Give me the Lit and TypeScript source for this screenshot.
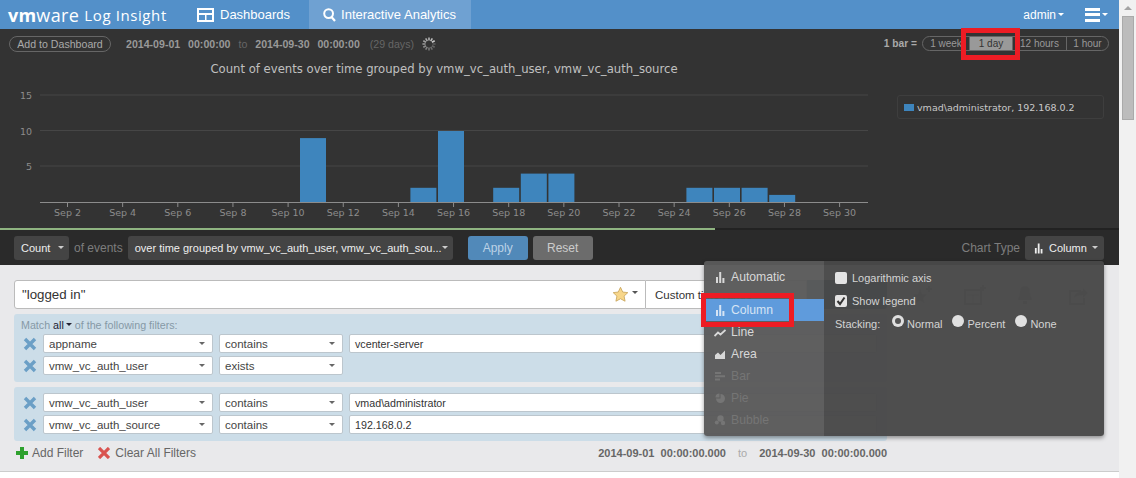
import { LitElement, html, css, svg } from 'lit';
import { customElement } from 'lit/decorators.js';

const BAR_STEP = 27.6;
const BARS = [
  { k: 0, v: 9 },
  { k: 4, v: 2 },
  { k: 5, v: 10 },
  { k: 7, v: 2 },
  { k: 8, v: 4 },
  { k: 9, v: 4 },
  { k: 14, v: 2 },
  { k: 15, v: 2 },
  { k: 16, v: 2 },
  { k: 17, v: 1 },
];
const DAYS = [2, 4, 6, 8, 10, 12, 14, 16, 18, 20, 22, 24, 26, 28, 30];

const caret = html`<i class="caret"></i>`;

const columnIcon = html`<svg class="ico" viewBox="0 0 10 12"><path d="M1 6h2v6H1zM4.2 1h2v11h-2zM7.4 7h2v5h-2z" fill="currentColor"/></svg>`;
const lineIcon = html`<svg class="ico wide" viewBox="0 0 12 12"><path d="M.5 10 4 6.500l2.500 2L11.500 4" fill="none" stroke="currentColor" stroke-width="1.800"/></svg>`;
const areaIcon = html`<svg class="ico wide" viewBox="0 0 12 12"><path d="M1 11V7l3-2.500L6.500 7 11 2.500V11z" fill="currentColor"/></svg>`;
const barIcon = html`<svg class="ico wide" viewBox="0 0 12 12"><path d="M1 2h6v2H1zM1 5.200h10v2H1zM1 8.400h5v2H1z" fill="currentColor"/></svg>`;
const pieIcon = html`<svg class="ico wide" viewBox="0 0 12 12"><path d="M6.500 2a4.500 4.500 0 1 1-4.500 4.500h4.500z" fill="currentColor"/><path d="M5.500 1.500v4H1.500a4 4 0 0 1 4-4z" fill="currentColor"/></svg>`;
const bubbleIcon = html`<svg class="ico wide" viewBox="0 0 12 12"><circle cx="6.500" cy="4.500" r="3.200" fill="currentColor"/><circle cx="2.800" cy="8.600" r="2" fill="currentColor"/><circle cx="9" cy="9" r="2.200" fill="currentColor"/></svg>`;

const removeIcon = html`<svg class="rm" viewBox="0 0 14 14"><path d="M2 2l10 10M12 2 2 12" stroke="#6b9fc6" stroke-width="3.400" fill="none"/></svg>`;

@customElement('filter-row')
class FilterRow extends LitElement {
  static properties = {
    field: { type: String },
    op: { type: String },
    value: { type: String },
  };

  declare field: string;
  declare op: string;
  declare value: string;

  static styles = css`
    :host {
      display: flex;
      align-items: center;
      height: 19px;
      gap: 6px;
    }
    .rm {
      width: 14px;
      height: 14px;
      margin: 0 0 0 9px;
      flex: none;
    }
    .sel,
    .val {
      height: 19px;
      box-sizing: border-box;
      background: #fff;
      border: 1px solid #bcc6cd;
      border-radius: 2px;
      font-size: 11.5px;
      color: #444;
      display: flex;
      align-items: center;
      padding: 0 5px;
    }
    .sel {
      justify-content: space-between;
    }
    .f {
      width: 170px;
    }
    .o {
      width: 124px;
    }
    .val {
      flex: 1;
      margin-right: 10px;
      color: #333;
      font-size: 10.7px;
    }
    .caret {
      border-top: 3px solid #666;
      border-left: 3px solid transparent;
      border-right: 3px solid transparent;
      margin-right: 2px;
    }
  `;

  render() {
    return html`
      ${removeIcon}
      <div class="sel f">${this.field}<i class="caret"></i></div>
      <div class="sel o">${this.op}<i class="caret"></i></div>
      ${this.value ? html`<div class="val">${this.value}</div>` : ''}
    `;
  }
}

@customElement('app-root')
export class AppRoot extends LitElement {
  static styles = css`
    :host {
      display: block;
      width: 1136px;
      height: 478px;
      overflow: hidden;
      position: relative;
      font-family: 'Liberation Sans', Arial, sans-serif;
      font-size: 12px;
      background: #fff;
    }
    .page {
      display: flex;
      height: 478px;
    }
    .main {
      width: 1119px;
      flex: none;
      display: flex;
      flex-direction: column;
    }
    .scrollbar {
      flex: 1;
      background: #f1f1f1;
      display: flex;
      flex-direction: column;
      align-items: center;
    }
    .scrollbar .arrow {
      margin-top: 6px;
      border-bottom: 4px solid #a3a3a3;
      border-left: 4px solid transparent;
      border-right: 4px solid transparent;
    }
    .scrollbar .thumb {
      width: 12px;
      height: 104px;
      margin-top: 6px;
      background: #bcbcbc;
      border: 1px solid #aaa;
      box-sizing: border-box;
    }

    .caret {
      display: inline-block;
      border-top: 3px solid currentColor;
      border-left: 3px solid transparent;
      border-right: 3px solid transparent;
    }

    /* top nav */
    nav {
      height: 29px;
      background: #5390c9;
      display: flex;
      align-items: stretch;
      color: #fff;
    }
    .brand {
      width: 181px;
      padding-left: 8px;
      box-sizing: border-box;
      display: flex;
      align-items: center;
      white-space: nowrap;
      font-family: 'Open Sans', sans-serif;
    }
    .brand .vm {
      font-size: 18px;
      font-weight: 700;
      letter-spacing: 0.2px;
    }
    .brand .ware {
      font-size: 18px;
      font-weight: 400;
      letter-spacing: 0.4px;
    }
    .brand .li {
      font-size: 15px;
      margin-left: 5px;
      letter-spacing: 0.6px;
    }
    .tab {
      display: flex;
      align-items: center;
      gap: 6px;
      font-size: 13px;
      padding: 0 19px 0 16px;
    }
    .tab.active {
      background: #6fa1d2;
      gap: 5px;
      padding: 0 15px 0 14px;
    }
    .tab svg {
      flex: none;
    }
    .nav-right {
      margin-left: auto;
      display: flex;
      align-items: center;
      padding-right: 11px;
      font-size: 12px;
    }
    .nav-right .admin {
      display: flex;
      align-items: center;
      gap: 2px;
      margin-right: 21px;
    }
    .burger {
      width: 15px;
      height: 14px;
      display: flex;
      flex-direction: column;
      justify-content: space-between;
    }
    .burger b {
      height: 3px;
      background: #fff;
      display: block;
    }
    .burger-caret {
      margin-left: 2px;
    }

    /* chart panel */
    .chart-panel {
      height: 199px;
      background: #333;
      display: flex;
      flex-direction: column;
      position: relative;
    }
    .range-row {
      display: flex;
      align-items: center;
      height: 29px;
      padding: 0 10px 0 9px;
      color: #999;
      font-size: 10.6px;
      white-space: nowrap;
    }
    .pill {
      border: 1px solid #666;
      border-radius: 9px;
      height: 16px;
      width: 102px;
      box-sizing: border-box;
      color: #aaa;
      display: flex;
      align-items: center;
      justify-content: center;
      margin-right: 15px;
    }
    .range-row .stamp {
      white-space: pre;
      word-spacing: 1px;
    }
    .range-row .to {
      color: #666;
      margin: 0 8px 0 8px;
    }
    .range-row .days {
      color: #666;
      margin-left: 10px;
    }
    .spinner {
      width: 14px;
      height: 14px;
      margin-left: 8px;
    }
    .grain {
      margin-left: auto;
      display: flex;
      align-items: center;
      gap: 5px;
    }
    .grain > b {
      color: #aaa;
      font-size: 10.2px;
    }
    .seg {
      display: flex;
      height: 15px;
      width: 187px;
      box-sizing: border-box;
      border: 1px solid #666;
      border-radius: 8px;
      overflow: hidden;
      color: #999;
      font-size: 10px;
    }
    .seg span {
      display: flex;
      align-items: center;
      justify-content: center;
      border-left: 1px solid #666;
      box-sizing: border-box;
    }
    .seg span:first-child {
      border-left: 0;
    }
    .seg .w1 {
      width: 46px;
    }
    .seg .w2 {
      width: 43px;
    }
    .seg .w3 {
      width: 54px;
    }
    .seg .w4 {
      width: 42px;
    }
    .seg .on {
      background: #999;
      color: #333;
    }
    .chart-body {
      flex: 1;
      display: flex;
      position: relative;
    }
    .chart-body svg {
      display: block;
      flex: none;
    }
    .chart-body text {
      font-family: 'DejaVu Sans', Verdana, sans-serif;
    }
    .legend {
      margin: 37px 0 0 9px;
      width: 207px;
      height: 24px;
      box-sizing: border-box;
      border: 1px solid #3e3e3e;
      border-radius: 3px;
      display: flex;
      align-items: center;
      gap: 3px;
      padding-left: 6px;
      color: #c8c8c8;
      font-family: 'DejaVu Sans', Verdana, sans-serif;
      font-size: 9.5px;
      white-space: nowrap;
    }
    .legend i {
      width: 10px;
      height: 7px;
      background: #3e85bd;
    }

    /* toolbar */
    .progress {
      height: 2px;
      background: #222;
    }
    .progress div {
      width: 715px;
      height: 2px;
      background: #8fb481;
    }
    .toolbar {
      height: 35px;
      background: #2a2a2a;
      display: flex;
      align-items: center;
      padding: 0 15px 0 14px;
      color: #7d7d7d;
      font-size: 12px;
      white-space: nowrap;
    }
    .dd {
      height: 24px;
      background: #444;
      border-radius: 3px;
      color: #eee;
      font-size: 11px;
      display: flex;
      align-items: center;
      justify-content: space-between;
      box-sizing: border-box;
      padding: 0 6px 0 7px;
      flex: none;
    }
    .dd .caret {
      color: #ccc;
    }
    .dd.count {
      width: 55px;
      padding-right: 5px;
    }
    .dd.over {
      width: 325px;
    }
    .dd.type {
      width: 79px;
      margin-left: 5px;
      padding-left: 9px;
      justify-content: flex-start;
    }
    .dd.type .lab {
      margin-left: 6px;
      flex: 1;
    }
    .dd.type .ico {
      width: 9px;
    }
    .toolbar .of {
      margin: 0 5px;
    }
    .btn {
      width: 60px;
      height: 24px;
      border-radius: 3px;
      display: flex;
      align-items: center;
      justify-content: center;
      color: #bcd2e6;
      background: #5189b9;
      margin-left: 15px;
      flex: none;
    }
    .btn.reset {
      background: #6c6c6c;
      color: #ccc;
      margin-left: 5px;
    }
    .toolbar .ct {
      margin-left: auto;
    }

    /* query area */
    .query {
      height: 207px;
      background: #e9e9eb;
      border-bottom: 1px solid #ccc;
      box-sizing: border-box;
      padding: 15px 0 0 14px;
      display: flex;
      flex-direction: column;
    }
    .search-row {
      height: 29px;
      display: flex;
      align-items: center;
      flex: none;
    }
    .search {
      width: 632px;
      height: 29px;
      box-sizing: border-box;
      background: #fff;
      border: 1px solid #bbb;
      border-radius: 3px 0 0 3px;
      display: flex;
      align-items: center;
      padding: 0 7px;
      font-size: 13.3px;
      color: #333;
    }
    .search .q {
      flex: 1;
    }
    .search svg {
      width: 17px;
      height: 17px;
    }
    .search .caret {
      color: #555;
      margin-left: 3px;
      margin-top: -5px;
    }
    .timesel {
      width: 161px;
      height: 29px;
      box-sizing: border-box;
      background: #fff;
      border: 1px solid #bbb;
      border-left: 0;
      display: flex;
      align-items: center;
      padding-left: 9px;
      color: #333;
      font-size: 11.5px;
      white-space: nowrap;
      overflow: hidden;
    }
    .go {
      width: 80px;
      height: 29px;
      background: #2b5f8c;
      border-radius: 0 3px 3px 0;
    }
    .tools {
      display: flex;
      align-items: center;
      margin-left: 24px;
      gap: 28px;
      color: #aaa;
    }
    .tools svg {
      width: 24px;
      height: 20px;
    }
    .group {
      width: 873px;
      background: #ccdde8;
      border-radius: 3px;
      box-sizing: border-box;
      display: flex;
      flex-direction: column;
      gap: 3px;
    }
    .group.one {
      margin-top: 5px;
      height: 68px;
      padding-top: 4px;
    }
    .group.two {
      margin-top: 5px;
      height: 54px;
      padding-top: 6px;
    }
    .match {
      height: 13px;
      display: flex;
      align-items: center;
      padding-left: 7px;
      font-size: 10.7px;
      color: #8699a6;
      gap: 3px;
    }
    .match b {
      font-weight: 400;
      color: #223;
      display: inline-flex;
      align-items: center;
      gap: 2px;
    }
    .foot {
      display: flex;
      align-items: center;
      height: 24px;
      width: 873px;
      color: #666;
      padding-left: 2px;
      box-sizing: border-box;
    }
    .foot .act {
      display: flex;
      align-items: center;
      gap: 4px;
      margin-right: 15px;
    }
    .foot .act.clear {
      gap: 5px;
    }
    .foot svg {
      width: 12px;
      height: 12px;
    }
    .foot .dates {
      margin-left: auto;
      font-size: 11px;
      font-weight: 700;
      white-space: pre;
      color: #666;
    }
    .foot .dates span {
      color: #aaa;
      font-weight: 400;
      margin: 0 12px;
    }

    /* chart type popup */
    .menu {
      position: absolute;
      left: 704px;
      top: 261px;
      width: 400px;
      height: 175px;
      border-radius: 3px;
      box-shadow: 0 2px 4px rgba(0, 0, 0, 0.4);
      display: flex;
      overflow: hidden;
      color: #ccc;
      font-size: 12px;
    }
    .menu .left {
      width: 120px;
      background: rgba(90, 90, 90, 0.97);
      padding-top: 5px;
      box-sizing: border-box;
    }
    .menu .right {
      flex: 1;
      background: rgba(72, 72, 72, 0.97);
      padding: 5px 0 0 11px;
      box-sizing: border-box;
    }
    .mi {
      height: 22px;
      display: flex;
      align-items: center;
      gap: 6px;
      padding-left: 11px;
      font-size: 12.2px;
      color: #d8d8d8;
    }
    .mi.first {
      margin-bottom: 11px;
    }
    .mi.on {
      background: #5f9bdc;
      color: #d6e4f4;
    }
    .mi.off {
      color: #757575;
    }
    .ico {
      width: 10px;
      height: 12px;
      flex: none;
    }
    .ico.wide {
      width: 12px;
      margin-left: -1px;
      margin-right: -1px;
    }
    .opt {
      height: 23px;
      display: flex;
      align-items: center;
      gap: 5px;
      font-size: 11px;
      color: #d4d4d4;
    }
    .check {
      width: 12px;
      height: 12px;
      background: #e4e4e4;
      border-radius: 2px;
      flex: none;
      display: flex;
    }
    .stack {
      gap: 0;
      white-space: nowrap;
    }
    .stack .lab {
      width: 57px;
    }
    .radio {
      width: 12px;
      height: 12px;
      border-radius: 50%;
      background: #e0e0e0;
      margin: -5px 3px 0 0;
      display: flex;
      align-items: center;
      justify-content: center;
      flex: none;
    }
    .radio i {
      width: 6px;
      height: 6px;
      border-radius: 50%;
      background: #555;
    }
    .stack span.t {
      margin-right: 10px;
    }

    /* red annotation boxes */
    .mark {
      position: absolute;
      border: 5px solid #ed1c24;
      box-sizing: border-box;
    }
    .mark.day {
      left: 961px;
      top: 28px;
      width: 59px;
      height: 32px;
    }
    .mark.col {
      left: 701px;
      top: 293px;
      width: 93px;
      height: 34px;
    }
  `;

  private chart() {
    const gridY = [95, 130.5, 166];
    return html`<svg width="888" height="170" viewBox="0 58 888 170">
      <text x="444" y="73" text-anchor="middle" font-size="11.65" fill="#c0c0c0">Count of events over time grouped by vmw_vc_auth_user, vmw_vc_auth_source</text>
      ${gridY.map((y) => svg`<line x1="40" x2="868" y1=${y} y2=${y} stroke="#464646"/>`)}
      ${[15, 10, 5].map((n, i) => svg`<text x="32" y=${gridY[i] + 4} text-anchor="end" font-size="9.5" fill="#8c8c8c">${n}</text>`)}
      ${BARS.map((b) => svg`<rect x=${300 + b.k * BAR_STEP} y=${202 - b.v * 7.1} width="26" height=${b.v * 7.1} fill="#3e85bd"/>`)}
      <line x1="40" x2="868" y1="202.5" y2="202.5" stroke="#8c8c8c"/>
      ${DAYS.map((d) => {
        const x = 67.5 + ((d - 2) / 2) * 55.15;
        return svg`<line x1=${x} x2=${x} y1="203" y2="207" stroke="#8c8c8c"/>
          <text x=${x} y="216" text-anchor="middle" font-size="9.5" fill="#8c8c8c">Sep ${d}</text>`;
      })}
    </svg>`;
  }

  private spinner() {
    const rays = Array.from({ length: 12 }, (_, i) => i);
    return html`<svg class="spinner" viewBox="-7 -7 14 14">
      ${rays.map((i) => {
        const a = (i * Math.PI) / 6;
        const c = Math.cos(a);
        const s = Math.sin(a);
        const g = 90 + i * 10;
        return svg`<line x1=${c * 3.4} y1=${s * 3.4} x2=${c * 6.6} y2=${s * 6.6} stroke=${`rgb(${g},${g},${g})`} stroke-width="1.6"/>`;
      })}
    </svg>`;
  }

  render() {
    return html`
      <div class="page">
        <div class="main">
          <nav>
            <div class="brand"><span class="vm">vm</span><span class="ware">ware</span><span class="li">Log Insight</span></div>
            <div class="tab">
              <svg width="17" height="14" viewBox="0 0 17 14"><rect width="17" height="14" fill="#fff"/><path d="M2 2h13v3H2zM2 7h6v5H2zM9.500 7H15v5H9.500z" fill="#5390c9"/></svg>
              Dashboards
            </div>
            <div class="tab active">
              <svg width="13" height="14" viewBox="0 0 13 14"><circle cx="5.600" cy="5.600" r="4.400" fill="none" stroke="#fff" stroke-width="2"/><path d="M8.500 9l3.500 4" stroke="#fff" stroke-width="2.200"/></svg>
              Interactive Analytics
            </div>
            <div class="nav-right">
              <div class="admin">admin ${caret}</div>
              <div class="burger"><b></b><b></b><b></b></div>
              <i class="caret burger-caret"></i>
            </div>
          </nav>

          <section class="chart-panel">
            <div class="range-row">
              <div class="pill">Add to Dashboard</div>
              <b class="stamp">2014-09-01  00:00:00</b><span class="to">to</span><b class="stamp">2014-09-30  00:00:00</b>
              <span class="days">(29 days)</span>
              ${this.spinner()}
              <div class="grain">
                <b>1 bar =</b>
                <div class="seg">
                  <span class="w1">1 week</span>
                  <span class="w2 on">1 day</span>
                  <span class="w3">12 hours</span>
                  <span class="w4">1 hour</span>
                </div>
              </div>
            </div>
            <div class="chart-body">
              ${this.chart()}
              <div class="legend"><i></i>vmad\\administrator, 192.168.0.2</div>
            </div>
          </section>

          <div class="progress"><div></div></div>
          <div class="toolbar">
            <div class="dd count">Count ${caret}</div>
            <span class="of">of events</span>
            <div class="dd over">over time grouped by vmw_vc_auth_user, vmw_vc_auth_sou... ${caret}</div>
            <div class="btn">Apply</div>
            <div class="btn reset">Reset</div>
            <span class="ct">Chart Type</span>
            <div class="dd type">${columnIcon}<span class="lab">Column</span>${caret}</div>
          </div>

          <section class="query">
            <div class="search-row">
              <div class="search">
                <span class="q">"logged in"</span>
                <svg viewBox="0 0 20 20"><path d="M10 1.500l2.600 5.600 6 .7-4.400 4.100 1.200 6L10 15l-5.400 2.900 1.200-6L1.400 7.800l6-.7z" fill="#f7d68a" stroke="#c9a55c"/></svg>
                ${caret}
              </div>
              <div class="timesel">Custom time range</div>
              <div class="go"></div>
              <div class="tools">
                <svg viewBox="0 0 24 20"><path d="M9 4l2 5 5 .5-4 3.500 1.300 5L9 15.500 4.700 18 6 13 2 9.500 7 9z" fill="currentColor"/><path d="M18 1v6M15 4h6" stroke="currentColor" stroke-width="2"/></svg>
                <svg viewBox="0 0 24 20"><path d="M2 5h16v14H2z" fill="none" stroke="currentColor" stroke-width="2"/><path d="M4 10h12M10 10v8" stroke="currentColor"/><path d="M20 0v6M17 3h6" stroke="currentColor" stroke-width="2"/></svg>
                <svg viewBox="0 0 24 20"><path d="M10 1c4 0 5 3 5 7 0 3 2 5 2 7H3c0-2 2-4 2-7 0-4 1-7 5-7zM8 16h4v3H8z" fill="currentColor"/></svg>
                <svg viewBox="0 0 24 20"><path d="M14 6H3v13h14v-6" fill="none" stroke="currentColor" stroke-width="2"/><path d="M7 13c1-5 5-7 9-7V3l5 5-5 5v-3c-4 0-7 1-9 3z" fill="currentColor"/></svg>
              </div>
            </div>
            <div class="group one">
              <div class="match">Match <b>all ${caret}</b> of the following filters:</div>
              <filter-row field="appname" op="contains" value="vcenter-server"></filter-row>
              <filter-row field="vmw_vc_auth_user" op="exists"></filter-row>
            </div>
            <div class="group two">
              <filter-row field="vmw_vc_auth_user" op="contains" value="vmad\\administrator"></filter-row>
              <filter-row field="vmw_vc_auth_source" op="contains" value="192.168.0.2"></filter-row>
            </div>
            <div class="foot">
              <div class="act">
                <svg viewBox="0 0 12 12"><path d="M4 0h4v4h4v4H8v4H4V8H0V4h4z" fill="#2ea12e"/></svg>
                Add Filter
              </div>
              <div class="act clear">
                <svg viewBox="0 0 12 12"><path d="M1 1l10 10M11 1 1 11" stroke="#d9534f" stroke-width="3.200" fill="none"/></svg>
                Clear All Filters
              </div>
              <div class="dates">2014-09-01  00:00:00.000<span>to</span>2014-09-30  00:00:00.000</div>
            </div>
          </section>
        </div>
        <div class="scrollbar"><div class="arrow"></div><div class="thumb"></div></div>
      </div>

      <div class="menu">
        <div class="left">
          <div class="mi first">${columnIcon} Automatic</div>
          <div class="mi on">${columnIcon} Column</div>
          <div class="mi">${lineIcon} Line</div>
          <div class="mi">${areaIcon} Area</div>
          <div class="mi off">${barIcon} Bar</div>
          <div class="mi off">${pieIcon} Pie</div>
          <div class="mi off">${bubbleIcon} Bubble</div>
        </div>
        <div class="right">
          <div class="opt"><span class="check"></span> Logarithmic axis</div>
          <div class="opt">
            <span class="check"><svg viewBox="0 0 12 12"><path d="M2.500 6l2.500 3L9.500 2.500" fill="none" stroke="#333" stroke-width="2"/></svg></span>
            Show legend
          </div>
          <div class="opt stack">
            <span class="lab">Stacking:</span>
            <span class="radio"><i></i></span><span class="t">Normal</span>
            <span class="radio"></span><span class="t">Percent</span>
            <span class="radio"></span><span class="t">None</span>
          </div>
        </div>
      </div>

      <div class="mark day"></div>
      <div class="mark col"></div>
    `;
  }
}
